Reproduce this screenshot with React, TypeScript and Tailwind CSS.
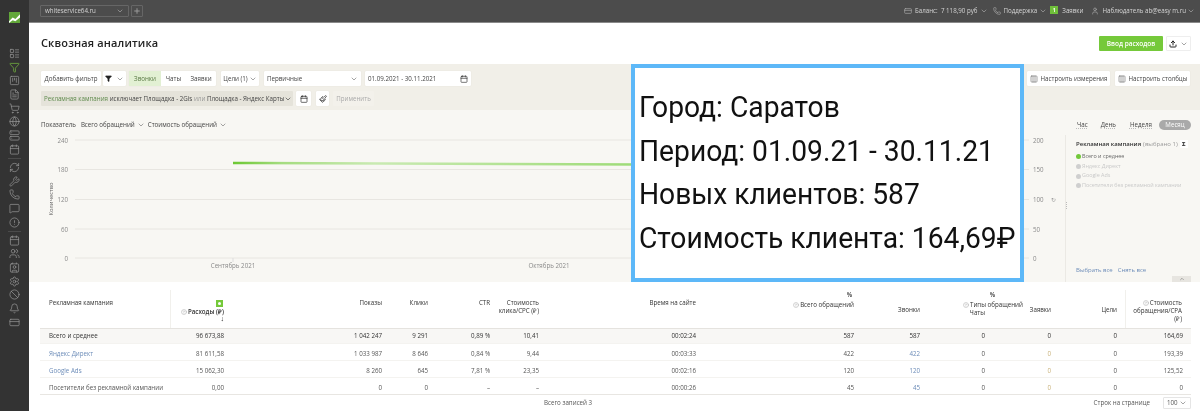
import { AlertCircle, Ban, Bell, Calendar, ChevronDown, ChevronUp, Columns3, Contact, CreditCard, FileText, Filter, Globe, HelpCircle, LayoutList, MessageSquare, Paintbrush, Phone, Plus, RefreshCw, Server, Settings, ShoppingCart, SquareKanban, Upload, User, Users, Wrench } from 'lucide-react'

const topIcons = [LayoutList, Filter, SquareKanban, FileText, ShoppingCart, Globe, Server, Calendar]
const midIcons = [RefreshCw, Wrench, Phone, MessageSquare, AlertCircle]
const lowIcons = [Calendar, Users, Contact, Settings, Ban, Bell, CreditCard]

const columns = 'grid grid-cols-[131px_61px_158px_46px_62px_49px_157px_158px_66px_65px_66px_66px_66px]'

const rows = [
  { name: 'Яндекс Директ', link: true, v: ['81 611,58', '1 033 987', '8 646', '0,84 %', '9,44', '00:03:33', '422', '422', '0', '0', '0', '193,39'] },
  { name: 'Google Ads', link: true, v: ['15 062,30', '8 260', '645', '7,81 %', '23,35', '00:02:16', '120', '120', '0', '0', '0', '125,52'] },
  { name: 'Посетители без рекламной кампании', link: false, v: ['0,00', '0', '0', '–', '–', '00:00:26', '45', '45', '0', '0', '0', '0'] },
]
const totals = ['96 673,88', '1 042 247', '9 291', '0,89 %', '10,41', '00:02:24', '587', '587', '0', '0', '0', '164,69']

function Chev({ className = 'text-[#777]' }: { className?: string }) {
  return <ChevronDown size={8} className={`shrink-0 ${className}`} />
}

function Box({ children, className = '' }: { children: React.ReactNode; className?: string }) {
  return <div className={`h-[15px] flex items-center bg-white rounded-[1px] shadow-[0_0_1px_#d5d3ca] text-[6.2px] text-[#444] whitespace-nowrap ${className}`}>{children}</div>
}

function Sidebar() {
  return (
    <aside className="w-[29px] shrink-0 bg-[#333333] flex flex-col items-center text-[#9a9a9a]">
      <svg viewBox="0 0 12 12" className="w-[11px] h-[11px] mt-[12px] mb-[25px]">
        <rect width="12" height="12" fill="#62a83a" />
        <path d="M0 10 L4 6 L7 7.5 L12 2.5 V6 L7 10 L4 9 L0 12Z" fill="#fff" />
      </svg>
      <div className="flex flex-col gap-[2.7px] items-center">
        {topIcons.map((I, i) => <I key={i} size={11} strokeWidth={1.5} className={i === 1 ? 'text-[#7cc142]' : ''} />)}
      </div>
      <div className="w-[13px] h-px bg-[#4b4b4b] my-[3px]" />
      <div className="flex flex-col gap-[2.7px] items-center">
        {midIcons.map((I, i) => <I key={i} size={11} strokeWidth={1.5} />)}
      </div>
      <div className="w-[13px] h-px bg-[#4b4b4b] my-[3px]" />
      <div className="flex flex-col gap-[2.7px] items-center">
        {lowIcons.map((I, i) => <I key={i} size={11} strokeWidth={1.5} />)}
      </div>
    </aside>
  )
}

function Topbar() {
  return (
    <header className="h-[23px] bg-[#4c4c4c] border-b border-[#8a8a8a] flex items-center pl-[11px] pr-[5px] text-[6.2px] text-[#d4d4d4] whitespace-nowrap">
      <div className="w-[89px] h-[12px] border border-[#666] rounded-[1px] flex items-center justify-between px-[4px]">
        whiteservice64.ru <Chev className="text-[#aaa]" />
      </div>
      <div className="ml-[2px] w-[12px] h-[12px] border border-[#666] rounded-[1px] flex items-center justify-center">
        <Plus size={8} strokeWidth={3} className="text-[#999]" />
      </div>
      <div className="ml-auto flex items-center">
        <CreditCard size={8} className="text-[#aaa] mr-[3px]" />
        <span>Баланс:&nbsp; 7 118,90 руб</span><Chev className="text-[#aaa] ml-[2px]" />
        <Phone size={8} className="text-[#aaa] ml-[5px] mr-[3px]" />
        <span>Поддержка</span><Chev className="text-[#aaa] ml-[2px]" />
        <span className="ml-[3px] mr-[4px] w-[8px] h-[8px] mb-[3px] bg-[#6fbf3a] text-white text-[5px] leading-[8px] text-center font-bold">1</span>
        <span>Заявки</span>
        <User size={8} className="text-[#aaa] ml-[8px] mr-[3px]" />
        <span>Наблюдатель ab@easy m.ru</span><Chev className="text-[#aaa] ml-[1px]" />
      </div>
    </header>
  )
}

function Toolbar() {
  return (
    <section className="h-[46px] bg-[#f1efe8] pt-[7px] pl-[12px] pr-[10px] flex justify-between">
      <div className="flex flex-col gap-[5px]">
        <div className="flex items-center">
          <Box className="w-[60px] justify-center">Добавить фильтр</Box>
          <Box className="w-[23px] ml-[2px] justify-center gap-[4px]"><Filter size={7} className="text-[#222] fill-[#222]" /><Chev /></Box>
          <Box className="ml-[3px] w-[87px]">
            <span className="w-[32px] h-full flex items-center justify-center bg-[#e2f0d3] text-[#5a7a45]">Звонки</span>
            <span className="w-[25px] text-center">Чаты</span>
            <span className="w-[30px] text-center">Заявки</span>
          </Box>
          <Box className="ml-[5px] w-[38px] justify-center gap-[1px]">Цели (1) <Chev /></Box>
          <Box className="ml-[5px] w-[97px] justify-between px-[3px]">Первичные <Chev /></Box>
          <Box className="ml-[4px] w-[106px] justify-between px-[3px]">01.09.2021 - 30.11.2021 <Calendar size={8} className="text-[#333]" /></Box>
        </div>
        <div className="flex items-center">
          <div className="w-[252px] h-[15px] bg-[#e5e3da] rounded-[1px] flex items-center justify-between px-[3px] text-[6.2px] text-[#444] whitespace-nowrap">
            <span><span className="text-[#5e8a4c]">Рекламная кампания</span> исключает Площадка - 2Gis <span className="text-[#999]">или</span> Площадка - Яндекс Карты</span>
            <Chev className="text-[#444]" />
          </div>
          <Box className="ml-[3px] w-[15px] justify-center"><Calendar size={8} className="text-[#222]" /></Box>
          <Box className="ml-[5px] w-[13px] justify-center"><Paintbrush size={8} className="text-[#222]" /></Box>
          <div className="ml-[4px] w-[41px] h-[15px] bg-[#f3f1eb] rounded-[1px] flex items-center justify-center text-[6.2px] text-[#aaa]">Применить</div>
        </div>
      </div>
      <div className="flex gap-[5px]">
        <Box className="w-[83px] justify-center gap-[3px]"><Columns3 size={8} className="text-[#777]" />Настроить измерения</Box>
        <Box className="w-[75px] justify-center gap-[3px]"><Columns3 size={8} className="text-[#777]" />Настроить столбцы</Box>
      </div>
    </section>
  )
}

function Plot() {
  const grid = [[5, '240'], [34.5, '180'], [64.5, '120'], [94, '60'], [123, '0']] as const
  const right = [[5, '200'], [34.5, '150'], [64.5, '100'], [94, '50'], [123, '0']] as const
  return (
    <svg viewBox="0 0 1036 147" className="w-[1036px] h-[147px] block" fontFamily="Open Sans" fontSize="6.2" fill="#8a8a8a">
      <defs>
        <linearGradient id="ln" x1="0" x2="1" y1="0" y2="0">
          <stop offset="0" stopColor="#6cc832" />
          <stop offset="0.12" stopColor="#a5dc80" />
          <stop offset="0.35" stopColor="#c9eab2" />
          <stop offset="1" stopColor="#9ddb76" />
        </linearGradient>
      </defs>
      {grid.map(([y, t]) => (
        <g key={t}>
          <line x1="46" x2="1000" y1={y} y2={y} stroke="#e8e6e1" />
          <text x="39" y={y + 2.5} textAnchor="end">{t}</text>
        </g>
      ))}
      {right.map(([y, t]) => <text key={t} x="1004" y={y + 2.5}>{t}</text>)}
      <text x="1022" y="67" fontSize="6" fill="#999">↻</text>
      <text transform="translate(24 64) rotate(-90)" textAnchor="middle" fill="#666" fontSize="5.8">Количество</text>
      <path d="M204 28 L610 29.5" stroke="url(#ln)" strokeWidth="2.5" fill="none" />
      <line x1="204" x2="204" y1="123" y2="127" stroke="#ddd" />
      <text x="204" y="133" textAnchor="middle">Сентябрь 2021</text>
      <text x="520" y="133" textAnchor="middle">Октябрь 2021</text>
    </svg>
  )
}

function Chart() {
  return (
    <section className="h-[172px] bg-[#f8f7f3] flex">
      <div className="w-[1036px] shrink-0">
        <div className="h-[25px] flex items-center pl-[12px] text-[6.2px] text-[#444] pt-[5px]">
          <span>Показатель</span>
          <span className="ml-[5px]">Всего обращений</span><Chev className="text-[#777] ml-[2px]" />
          <span className="ml-[3px]">Стоимость обращений</span><Chev className="text-[#777] ml-[2px]" />
        </div>
        <Plot />
      </div>
      <div className="flex-1 min-w-0 flex flex-col pr-[9px] relative">
        <div className="h-[25px] flex items-center justify-end text-[6.2px] text-[#444] pt-[5px]">
          <span className="underline decoration-dotted decoration-[#bbb]">Час</span>
          <span className="ml-[13px] underline decoration-dotted decoration-[#bbb]">День</span>
          <span className="ml-[14px] underline decoration-dotted decoration-[#bbb]">Неделя</span>
          <span className="ml-[7px] w-[32px] h-[10px] rounded-full bg-[#a9a9a9] text-white text-center leading-[10px]">Месяц</span>
        </div>
        <div className="flex-1 border-l border-[#ebe9e4] pl-[10px] pt-[4px] flex flex-col">
          <div className="flex items-center text-[6px] whitespace-nowrap h-[10px]">
            <span className="font-semibold text-[#333]">Рекламная кампания</span>
            <span className="ml-[2px] text-[#999]">(выбрано 1)</span>
            <span className="ml-[2px] w-[8px] h-[8px] bg-white text-[#222] text-center leading-[8px] font-bold">Σ</span>
          </div>
          <div className="mt-[3px] flex flex-col text-[5.4px] leading-[9.7px] text-[#c9c9c9] whitespace-nowrap">
            <span className="flex items-center gap-[1px] text-[#666]"><i className="w-[5px] h-[5px] rounded-full bg-[#72c83a]" />Всего и среднее</span>
            <span className="flex items-center gap-[1px]"><i className="w-[5px] h-[5px] rounded-full bg-[#cfcfcf]" />Яндекс Директ</span>
            <span className="flex items-center gap-[1px]"><i className="w-[5px] h-[5px] rounded-full bg-[#cfcfcf]" />Google Ads</span>
            <span className="flex items-center gap-[1px]"><i className="w-[5px] h-[5px] rounded-full bg-[#cfcfcf]" />Посетители без рекламной кампании</span>
          </div>
          <div className="mt-auto mb-[7px] flex gap-[5px] text-[6px] text-[#6c8cb8]">
            <span>Выбрать все</span><span>Снять все</span>
          </div>
        </div>
        <div className="absolute left-[1px] top-[92px] flex flex-col gap-[1px]">
          <i className="w-[1px] h-[1px] bg-[#bbb]" /><i className="w-[1px] h-[1px] bg-[#bbb]" /><i className="w-[1px] h-[1px] bg-[#bbb]" /><i className="w-[1px] h-[1px] bg-[#bbb]" />
        </div>
        <div className="absolute right-[9px] bottom-0 w-[19px] h-[6px] bg-[#e7e5e0] flex items-center justify-center">
          <ChevronUp size={6} className="text-[#666]" />
        </div>
      </div>
    </section>
  )
}

function Num({ children, className = '' }: { children: React.ReactNode; className?: string }) {
  return <div className={`text-right pr-[8px] ${className}`}>{children}</div>
}

function Table() {
  return (
    <section className="bg-white pl-[11px] pr-[9px] pt-[8px] text-[6.2px] text-[#555] flex-1">
      <div className={`${columns} h-[39px] border-b-[1.5px] border-[#e5e3df] text-[#333] leading-[8px]`}>
        <div className="pl-[9px] pt-[9px] border-r border-[#f1f0ec]">Рекламная кампания</div>
        <div className="pr-[8px] flex flex-col items-end pt-[10px] whitespace-nowrap">
          <span className="w-[7px] h-[7px] bg-[#75c93a] mb-[1px] mr-[1px] flex items-center justify-center"><span className="w-[3px] h-[3px] bg-white rounded-full" /></span>
          <span className="flex items-center gap-[1px] font-semibold"><HelpCircle size={6} className="text-[#aaa]" />Расходы (₽)</span>
          <span className="text-[#111] text-[7px] leading-[6px] font-bold">↓</span>
        </div>
        <Num className="pt-[9px]">Показы</Num>
        <Num className="pt-[9px]">Клики</Num>
        <Num className="pt-[9px]">CTR</Num>
        <Num className="pt-[9px]">Стоимость клика/CPC (₽)</Num>
        <Num className="pt-[9px]">Время на сайте</Num>
        <div className="pr-[8px] flex flex-col items-end pt-[1px] whitespace-nowrap">
          <span className="pr-[2px] font-semibold">%</span>
          <span className="flex items-center gap-[1px] mt-[2px]"><HelpCircle size={6} className="text-[#aaa]" />Всего обращений</span>
        </div>
        <Num className="pt-[16px]">Звонки</Num>
        <div className="pr-[8px] flex flex-col items-end pt-[1px] whitespace-nowrap">
          <span className="font-semibold -mr-[10px]">%</span>
          <span className="flex items-center gap-[1px] mt-[2px] -mr-[38px]"><HelpCircle size={6} className="text-[#aaa]" />Типы обращений</span>
          <span>Чаты</span>
        </div>
        <Num className="pt-[16px]">Заявки</Num>
        <Num className="pt-[16px]">Цели</Num>
        <Num className="pt-[9px] border-l border-[#f1f0ec] pr-[9px] pl-[2px]">
          <HelpCircle size={6} className="inline text-[#aaa] mr-[1px]" />Стоимость обращения/CPA (₽)
        </Num>
      </div>
      <div className={`${columns} h-[14px] items-center bg-[#f8f7f5] text-[#333]`}>
        <div className="pl-[9px]">Всего и среднее</div>
        {totals.map((v, i) => <Num key={i}>{v}</Num>)}
      </div>
      <div className="border-b border-[#e8e6e2]">
        {rows.map((r) => (
          <div key={r.name} className={`${columns} h-[17px] pt-[3px] items-center border-t border-[#f4f3f0] whitespace-nowrap`}>
            <div className={`pl-[9px] ${r.link ? 'text-[#6c8cb8]' : ''}`}>{r.name}</div>
            {r.v.map((v, i) => <Num key={i} className={i === 7 ? 'text-[#6c8cb8]' : i === 9 ? 'text-[#c9b27a]' : ''}>{v}</Num>)}
          </div>
        ))}
      </div>
      <div className="h-[15px] flex items-center">
        <span className="ml-[504px]">Всего записей 3</span>
        <span className="ml-auto mr-[13px]">Строк на странице</span>
        <div className="w-[28px] h-[12px] border border-[#e5e5e5] rounded-[1px] flex items-center justify-between px-[3px]">100 <Chev /></div>
      </div>
    </section>
  )
}

export default function App() {
  return (
    <div className="relative w-[1200px] h-[411px] overflow-hidden bg-white font-['Open_Sans',sans-serif]">
      <div className="flex h-full blur-[0.3px]">
        <Sidebar />
        <main className="flex-1 min-w-0 flex flex-col">
          <Topbar />
          <div className="h-[41px] bg-white flex items-center justify-between pl-[12px] pr-[9px]">
            <h1 className="text-[11px] font-semibold text-[#222] tracking-[0.15px]">Сквозная аналитика</h1>
            <div className="flex items-center gap-[3px]">
              <button className="w-[64px] h-[15px] bg-[#75c93a] rounded-[1px] text-white text-[6.5px] font-semibold">Ввод расходов</button>
              <div className="w-[25px] h-[15px] border border-[#eee] rounded-[1px] flex items-center justify-center gap-[3px]"><Upload size={8} strokeWidth={3} className="text-[#222]" /><Chev /></div>
            </div>
          </div>
          <Toolbar />
          <Chart />
          <Table />
        </main>
      </div>
      <div className="absolute left-[631px] top-[64px] w-[393px] h-[218px] border-[4px] border-[#5db8f8] bg-white pl-[4px] pb-[2px] flex flex-col justify-center font-['Roboto',sans-serif] text-[30px] leading-[43.5px] text-[#111] whitespace-nowrap">
        <div className="origin-left scale-x-[0.94]">
          <div>Город: Саратов</div>
          <div>Период: 01.09.21 - 30.11.21</div>
          <div>Новых клиентов: 587</div>
          <div>Стоимость клиента: 164,69₽</div>
        </div>
      </div>
    </div>
  )
}
